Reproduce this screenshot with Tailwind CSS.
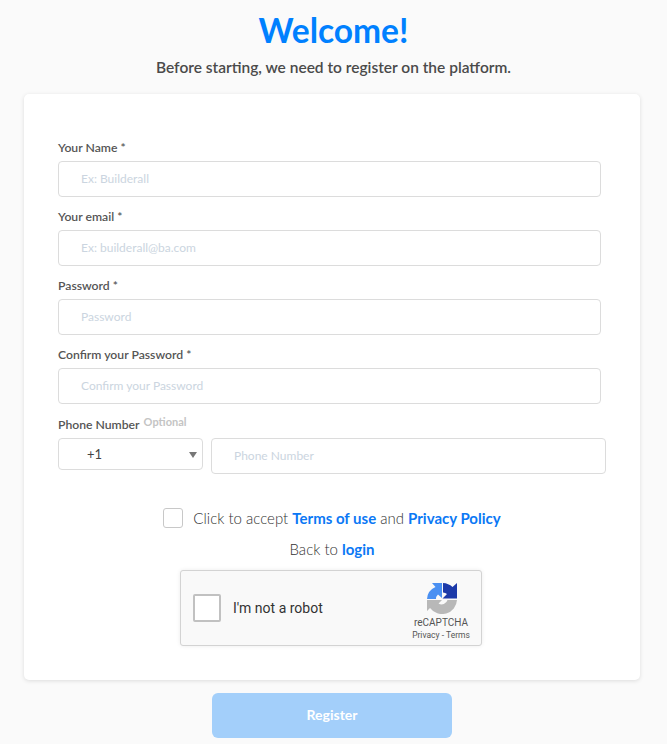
<!DOCTYPE html>
<html lang="en">
<head>
  <meta charset="UTF-8" />
  <title>Welcome</title>
  <script src="https://cdn.jsdelivr.net/npm/@tailwindcss/browser@4"></script>
</head>
<body class="bg-[#fafafa] font-['Lato',sans-serif] h-[744px] overflow-hidden">
  <div class="flex flex-col items-center">
    <h1 class="mt-[8px] h-[45px] leading-[45px] text-[33.5px] font-bold text-[#0080ff]">Welcome!</h1>
    <p class="mt-[4px] h-[20px] leading-[20px] text-[15.5px] font-semibold text-[#4a4a4a]">Before starting, we need to register on the platform.</p>
  </div>

  <!-- form card -->
  <div class="mx-[24px] mt-[17px] w-[616px] h-[586px] bg-white rounded-[5px] shadow-[0_1px_4px_rgba(0,0,0,0.12)] pt-[46px] pl-[34px]">
    <div class="flex flex-col gap-[8px] w-[543px]">
      <div>
        <label class="block h-[21px] leading-[16px] text-[12.2px] font-semibold text-[#555]">Your Name *</label>
        <input class="block w-full h-[36px] border border-[#dcdcdc] rounded-[4px] pl-[22px] pb-[2px] text-[12px] placeholder:text-[#cbd5e0]" placeholder="Ex: Builderall" />
      </div>
      <div>
        <label class="block h-[25px] pt-[4px] leading-[16px] text-[12.2px] font-semibold text-[#555]">Your email *</label>
        <input class="block w-full h-[36px] border border-[#dcdcdc] rounded-[4px] pl-[22px] pb-[2px] text-[12px] placeholder:text-[#cbd5e0]" placeholder="Ex: builderall@ba.com" />
      </div>
      <div>
        <label class="block h-[25px] pt-[4px] leading-[16px] text-[12.2px] font-semibold text-[#555]">Password *</label>
        <input class="block w-full h-[36px] border border-[#dcdcdc] rounded-[4px] pl-[22px] pb-[2px] text-[12px] placeholder:text-[#cbd5e0]" placeholder="Password" />
      </div>
      <div>
        <label class="block h-[25px] pt-[4px] leading-[16px] text-[12.2px] font-semibold text-[#555]">Confirm your Password *</label>
        <input class="block w-full h-[36px] border border-[#dcdcdc] rounded-[4px] pl-[22px] pb-[2px] text-[12px] placeholder:text-[#cbd5e0]" placeholder="Confirm your Password" />
      </div>
    </div>

    <div class="mt-[10px] h-[24px] flex items-start text-[12.2px] font-semibold text-[#555]">
      <span class="mt-[3px] leading-[16px]">Phone Number</span>
      <span class="ml-[4px] mt-[1px] leading-[14px] text-[11px] font-bold text-[#c4c4c4]">Optional</span>
    </div>
    <div class="flex gap-[8px] items-start">
      <div class="relative w-[145px] h-[32px]">
        <select class="w-full h-full appearance-none bg-white border border-[#dcdcdc] rounded-[4px] pl-[28px] pt-[2px] text-[13px] text-[#444]"><option>+1</option></select>
        <svg class="absolute right-[6px] top-[14px] w-[8px] h-[6px]" viewBox="0 0 8 6"><path d="M0 0h8L4 6z" fill="#777"/></svg>
      </div>
      <input class="block w-[395px] h-[36px] border border-[#dcdcdc] rounded-[4px] pl-[22px] pb-[2px] text-[12px] placeholder:text-[#cbd5e0]" placeholder="Phone Number" />
    </div>

    <div class="mt-[34px] -ml-[34px] flex justify-center items-center h-[20px] text-[15px] font-light text-[#333]">
      <span class="w-[20px] h-[20px] mr-[10px] bg-white border border-[#c8c8c8] rounded-[3px]"></span>
      <span>Click to accept <a class="font-bold text-[#0b78f5]">Terms of use</a> and <a class="font-bold text-[#0b78f5]">Privacy Policy</a></span>
    </div>
    <p class="mt-[11px] -ml-[34px] text-center h-[20px] leading-[20px] text-[15px] font-light text-[#333]">Back to <a class="font-bold text-[#0b78f5]">login</a></p>

    <!-- recaptcha -->
    <div class="mt-[11px] ml-[122px] w-[302px] h-[76px] flex items-center bg-[#f9f9f9] border border-[#d3d3d3] rounded-[3px] shadow-[0_0_4px_rgba(0,0,0,0.08)] font-['Roboto',sans-serif]">
      <span class="ml-[12px] w-[28px] h-[28px] bg-white border-2 border-[#c1c1c1] rounded-[2px]"></span>
      <span class="ml-[12px] text-[14px] text-[#333]">I'm not a robot</span>
      <div class="ml-auto mr-[11px] pt-[6px] w-[58px] flex flex-col items-center text-[#555]">
        <svg class="w-[32px] h-[32px]" viewBox="425 581 32 32">
          <path d="M442 582H432L435.5 586A14 14 0 0 0 427 598H436A6 6 0 0 1 438 593.5L442 597z" fill="#4a90f2"/>
          <path d="M443 582A15 15 0 0 1 452.5 586L457 582V597.5H442.5L447 593A6 6 0 0 0 443 591.5z" fill="#1c3aa9"/>
          <path d="M427 599H442L438.5 602.5A6 6 0 0 0 447.5 599H457A15 15 0 0 1 430 607L427 610z" fill="#b8b8b8"/>
        </svg>
        <span class="mt-[3px] text-[10px] leading-[12px]">reCAPTCHA</span>
        <span class="mt-[1px] text-[8.5px] leading-[11px] whitespace-nowrap">Privacy - Terms</span>
      </div>
    </div>
  </div>

  <button class="block ml-[212px] mt-[13px] w-[240px] h-[45px] pb-[2px] rounded-[6px] bg-[#a3cffa] text-white text-[14px] font-bold">Register</button>
</body>
</html>
